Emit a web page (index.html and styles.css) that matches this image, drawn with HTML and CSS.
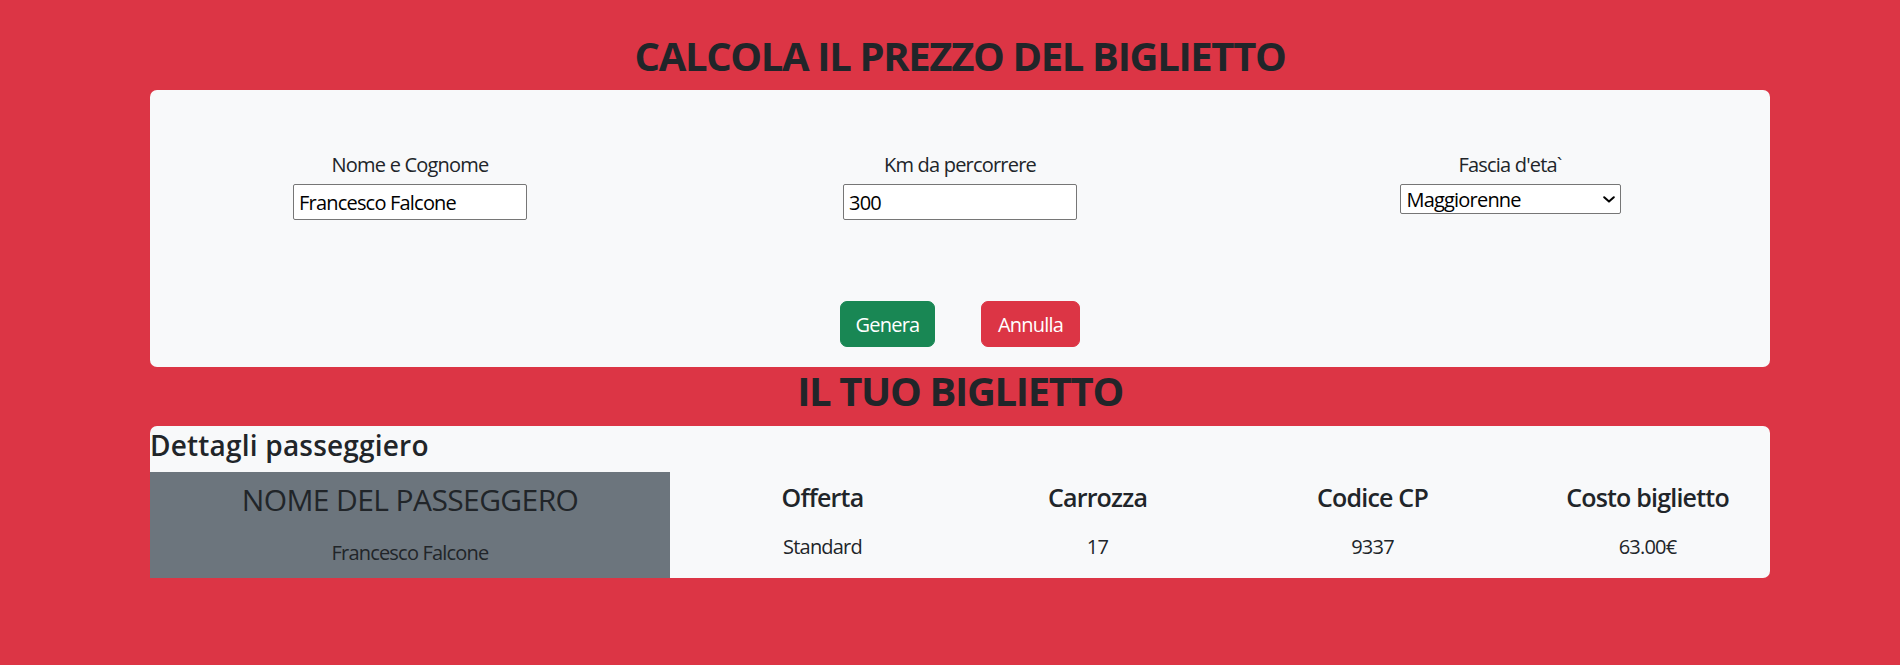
FILE: index.html
```html
<!DOCTYPE html>
<html lang="it">
<head>
<meta charset="utf-8">
<title>Calcola il prezzo del biglietto</title>
<link rel="stylesheet" href="styles.css">
</head>
<body>
<main class="page">
  <h1 class="title">CALCOLA IL PREZZO DEL BIGLIETTO</h1>
  <section class="card form-card">
    <div class="fields">
      <div class="field">
        <label class="field-label" for="nome">Nome e Cognome</label>
        <input class="text-input" id="nome" type="text" value="Francesco Falcone">
      </div>
      <div class="field">
        <label class="field-label" for="km">Km da percorrere</label>
        <input class="text-input" id="km" type="text" value="300">
      </div>
      <div class="field">
        <label class="field-label" for="eta">Fascia d'eta`</label>
        <div class="select-wrap">
          <select class="select-input" id="eta">
            <option>Maggiorenne</option>
            <option>Minorenne</option>
            <option>Over 65</option>
          </select>
          <svg class="select-arrow" width="12" height="7" viewBox="0 0 12 7" aria-hidden="true">
            <path d="M1.2 1.2 L6 5.6 L10.8 1.2" fill="none" stroke="#000" stroke-width="2" stroke-linecap="round" stroke-linejoin="round"/>
          </svg>
        </div>
      </div>
    </div>
    <div class="actions">
      <button class="btn btn-genera" type="button">Genera</button>
      <button class="btn btn-annulla" type="button">Annulla</button>
    </div>
  </section>

  <h1 class="title title-ticket">IL TUO BIGLIETTO</h1>
  <section class="card ticket">
    <h4 class="ticket-head">Dettagli passeggiero</h4>
    <div class="ticket-row">
      <div class="passenger">
        <h4 class="passenger-title">NOME DEL PASSEGGERO</h4>
        <p class="passenger-name">Francesco Falcone</p>
      </div>
      <div class="info-grid">
        <div class="info">
          <h5 class="info-title">Offerta</h5>
          <p class="info-value">Standard</p>
        </div>
        <div class="info">
          <h5 class="info-title">Carrozza</h5>
          <p class="info-value">17</p>
        </div>
        <div class="info">
          <h5 class="info-title">Codice CP</h5>
          <p class="info-value">9337</p>
        </div>
        <div class="info">
          <h5 class="info-title">Costo biglietto</h5>
          <p class="info-value">63.00€</p>
        </div>
      </div>
    </div>
  </section>
</main>
</body>
</html>
```

FILE: styles.css
```css
* {
  box-sizing: border-box;
}

html, body {
  margin: 0;
  padding: 0;
}

body {
  background: #dc3545;
  color: #212529;
  font-family: "Open Sans", "Noto Sans", "Liberation Sans", sans-serif;
  font-size: 20px;
  line-height: 30px;
  letter-spacing: -0.8px;
}

.page {
  width: 1620px;
  margin-left: 150px;
  padding-top: 32px;
}

.title {
  margin: 0 0 10px;
  font-size: 40px;
  line-height: 48px;
  font-weight: 700;
  letter-spacing: -1.35px;
  text-align: center;
}

.title-ticket {
  margin-bottom: 11px;
}

.card {
  background: #f8f9fa;
  border-radius: 7px;
}

.form-card {
  padding-bottom: 20px;
}

.fields {
  display: grid;
  grid-template-columns: repeat(3, 1fr);
  margin: 0 -15px;
}

.field {
  display: flex;
  flex-direction: column;
  align-items: center;
  padding: 60px 15px;
}

.field-label {
  display: block;
  margin-bottom: 4px;
}

.text-input {
  width: 234px;
  height: 36px;
  padding: 1px 5px;
  border: 1px solid #767676;
  border-radius: 2px;
  background: #fff;
  color: #000;
  font-family: inherit;
  font-size: 20px;
  letter-spacing: -0.8px;
}

.select-wrap {
  position: relative;
  width: 221px;
  height: 30px;
}

.select-input {
  appearance: none;
  -webkit-appearance: none;
  width: 221px;
  height: 30px;
  padding: 0 24px 0 6px;
  border: 1px solid #767676;
  border-radius: 2px;
  background: #fff;
  color: #000;
  font-family: inherit;
  font-size: 20px;
  letter-spacing: -0.8px;
}

.select-arrow {
  position: absolute;
  right: 6px;
  top: 12px;
  pointer-events: none;
}

.actions {
  display: flex;
  justify-content: center;
  gap: 46px;
  margin-top: 21px;
}

.btn {
  height: 46px;
  padding: 0;
  border: 1px solid transparent;
  border-radius: 7px;
  color: #fff;
  font-family: inherit;
  font-size: 20px;
  letter-spacing: -0.8px;
}

.btn-genera {
  width: 95px;
  background: #198754;
  border-color: #198754;
}

.btn-annulla {
  width: 99px;
  background: #dc3545;
  border-color: #dc3545;
}

.ticket-head {
  margin: 0 0 8px;
  font-size: 28px;
  line-height: 38px;
  font-weight: 600;
  letter-spacing: 0.2px;
}

.ticket-row {
  display: grid;
  grid-template-columns: 520px 1fr;
  column-gap: 15px;
  margin-right: -15px;
}

.passenger {
  background: #6c757d;
  text-align: center;
  padding: 10px 0 10px;
}

.passenger-title {
  margin: 0 0 20px;
  font-size: 30px;
  line-height: 36px;
  font-weight: 500;
  letter-spacing: -0.6px;
}

.passenger-name {
  margin: 0;
}

.info-grid {
  display: grid;
  grid-template-columns: repeat(4, 1fr);
}

.info {
  text-align: center;
  padding-top: 10px;
}

.info-title {
  margin: 0 0 20px;
  font-size: 25px;
  line-height: 30px;
  font-weight: 600;
}

.info-value {
  margin: 0;
}
```
